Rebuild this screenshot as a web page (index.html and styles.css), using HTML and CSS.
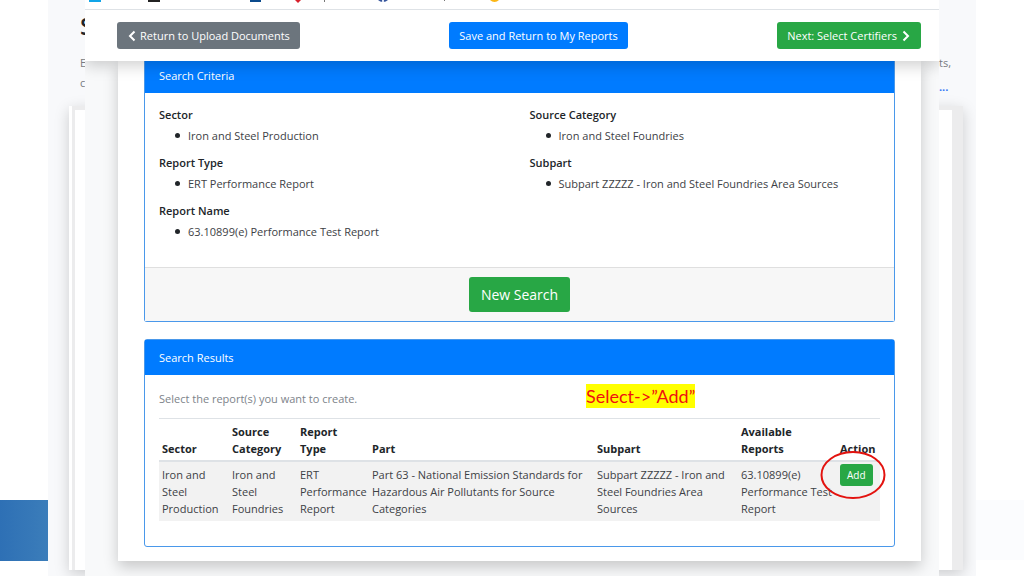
FILE: index.html
```html
<!DOCTYPE html>
<html lang="en">
<head>
<meta charset="utf-8">
<title>Search Results</title>
<link rel="stylesheet" href="styles.css">
</head>
<body>
<div class="slide">
  <div class="slide-band"></div>
  <div class="back-page">
    <div class="back-left">
      <div class="back-title">S</div>
      <div class="back-text">E<br>c</div>
    </div>
    <div class="back-right">
      <div class="back-text">ts,</div>
      <a class="back-link" href="#">...</a>
    </div>
    <div class="back-card"><div class="back-card-inner"></div></div>
  </div>

  <div class="front-page">
    <header class="topbar">
      <svg class="bookmarks" width="855" height="9" viewBox="0 0 855 9" aria-hidden="true">
        <rect x="4" y="0" width="12" height="2" fill="#12a5e8"/>
        <rect x="63" y="0" width="12" height="2" fill="#222"/>
        <rect x="165" y="0" width="11" height="2" fill="#0b4a8c"/>
        <path d="M210 0h6l-3 3z" fill="#d8202c"/>
        <path d="M239.500 0v2M359.500 0v1" stroke="#777"/>
        <path d="M293 0h10q-2 2-5 2t-5-2z" fill="#34539a"/>
        <path d="M297 0h2v2h-2z" fill="#dfe6f5"/>
        <path d="M405 0h9q-2 2-4.500 2T405 0z" fill="#fbb615"/>
      </svg>
      <nav class="toolbar">
        <button class="btn btn-gray" type="button">
          <svg width="9" height="12" viewBox="0 0 9 12" aria-hidden="true"><path d="M7.500 1.500L3 6l4.500 4.500" fill="none" stroke="#fff" stroke-width="2"/></svg>
          Return to Upload Documents
        </button>
        <button class="btn btn-blue" type="button">Save and Return to My Reports</button>
        <button class="btn btn-green" type="button">
          Next: Select Certifiers
          <svg width="10" height="12" viewBox="0 0 10 12" aria-hidden="true"><path d="M2.500 1.500L7 6l-4.500 4.500" fill="none" stroke="#fff" stroke-width="2"/></svg>
        </button>
      </nav>
    </header>

    <main class="sheet">
      <section class="card criteria">
        <h2 class="card-header">Search Criteria</h2>
        <div class="criteria-body">
          <dl class="terms">
            <dt>Sector</dt><dd>Iron and Steel Production</dd>
            <dt>Report Type</dt><dd>ERT Performance Report</dd>
            <dt>Report Name</dt><dd>63.10899(e) Performance Test Report</dd>
          </dl>
          <dl class="terms">
            <dt>Source Category</dt><dd>Iron and Steel Foundries</dd>
            <dt>Subpart</dt><dd>Subpart ZZZZZ - Iron and Steel Foundries Area Sources</dd>
          </dl>
        </div>
        <div class="card-footer"><button class="btn btn-green btn-large" type="button">New Search</button></div>
      </section>

      <section class="card results">
        <h2 class="card-header">Search Results</h2>
        <div class="results-body">
          <div class="intro">
            <p class="hint">Select the report(s) you want to create.</p>
            <mark class="callout">Select-&gt;”Add”</mark>
          </div>
          <table class="reports">
            <colgroup><col class="c-sector"><col class="c-source"><col class="c-type"><col class="c-part"><col class="c-subpart"><col class="c-reports"><col class="c-action"></colgroup>
            <thead>
              <tr><th>Sector</th><th>Source Category</th><th>Report Type</th><th>Part</th><th>Subpart</th><th>Available Reports</th><th>Action</th></tr>
            </thead>
            <tbody>
              <tr>
                <td>Iron and Steel Production</td>
                <td>Iron and Steel Foundries</td>
                <td>ERT Performance Report</td>
                <td>Part 63 - National Emission Standards for Hazardous Air Pollutants for Source Categories</td>
                <td>Subpart ZZZZZ - Iron and Steel Foundries Area Sources</td>
                <td>63.10899(e) Performance Test Report</td>
                <td><span class="action"><button class="btn btn-green btn-small" type="button">Add</button>
                  <svg class="ring" width="66" height="48" viewBox="0 0 66 48" aria-hidden="true"><ellipse cx="33" cy="24" rx="31.500" ry="23" fill="none" stroke="#e3130f" stroke-width="2"/></svg></span></td>
              </tr>
            </tbody>
          </table>
        </div>
      </section>
    </main>
  </div>
</div>
</body>
</html>
```

FILE: styles.css
```css
* { box-sizing: border-box; }

body {
  margin: 0;
  background: #fff;
  color: #212529;
  font-family: "Open Sans", "Noto Sans", sans-serif;
  font-size: 11px;
  line-height: 17px;
}

.slide {
  position: relative;
  height: 100vh;
  overflow: hidden;
  background: linear-gradient(#fff, #fff 500px, #fbfcfe 500px, #fbfcfe 560px, #fff 560px);
}

.slide-band {
  position: absolute;
  top: 500px;
  left: 0;
  width: 48px;
  height: 61px;
  background: linear-gradient(90deg, #2e70b5, #3b7dba);
}

/* Page shown behind the front window */
.back-page {
  position: absolute;
  inset: 0 48px 0 48px;
  overflow: hidden;
  background: #f8f9fb;
}

.back-left {
  position: absolute;
  top: 10px;
  left: 32px;
}

.back-title {
  font-size: 24px;
  font-weight: 600;
  line-height: 32px;
}

.back-text {
  color: #777b80;
  line-height: 20px;
}

.back-left .back-text { margin-top: 11px; }

.back-right {
  position: absolute;
  top: 53px;
  right: 25px;
}

.back-link {
  display: block;
  margin-top: 5px;
  color: #3478f6;
  font-weight: 700;
  text-decoration: none;
}

.back-card {
  position: absolute;
  inset: 106px 13px 6px 21px;
  padding: 4px 11px 0 3px;
  background: #ececed;
  border-left: 3px solid #fff;
  box-shadow: 0 4px 14px rgba(0, 0, 0, 0.18);
}

.back-card-inner {
  height: 100%;
  background: #fff;
}

/* Front window */
.front-page {
  position: absolute;
  inset: 0 85px 0 85px;
  overflow: hidden;
  background: #f8f9fa;
}

.topbar {
  position: relative;
  z-index: 1;
  background: #fff;
  box-shadow: 0 5px 14px rgba(0, 0, 0, 0.18);
}

.bookmarks { display: block; }

.toolbar {
  display: flex;
  justify-content: space-between;
  padding: 12px 18px 12px 32px;
  border-top: 1px solid #dee2e6;
}

.btn {
  display: flex;
  align-items: center;
  gap: 4px;
  height: 27px;
  padding: 0 10px;
  border: 0;
  border-radius: 3px;
  color: #fff;
  font: inherit;
  white-space: nowrap;
}

.btn-gray { background: #6c757d; }
.btn-blue { background: #007bff; }
.btn-green { background: #28a745; }

.btn-large {
  height: 35px;
  padding: 0 12px;
  font-size: 14px;
}

.btn-small {
  height: 22px;
  padding: 0 7px;
  font-size: 10px;
}

.sheet {
  margin: 0 18px 0 33px;
  padding: 0 26px 14px;
  background: #fff;
  box-shadow: 0 6px 14px rgba(0, 0, 0, 0.2);
}

.card {
  border: 1px solid #4a98ea;
  border-radius: 3px;
}

.criteria {
  border-top: 0;
  border-radius: 0 0 3px 3px;
}

.card-header {
  margin: 0;
  padding: 9px 14px;
  background: #007bff;
  color: #fff;
  font-size: 11px;
  font-weight: 400;
}

.criteria .card-header { padding: 6px 14px 9px; }

.criteria-body {
  display: grid;
  grid-template-columns: 1fr 1fr;
  gap: 20px;
  padding: 13px 14px 17px;
}

.terms { margin: 0; }

.terms dt { font-weight: 600; }

.terms dd {
  display: flex;
  align-items: center;
  gap: 8px;
  margin: 4px 0 10px 16px;
  color: #3d4145;
}

.terms dd::before {
  content: "";
  width: 5px;
  height: 5px;
  border-radius: 50%;
  background: #212529;
}

.card-footer {
  display: flex;
  justify-content: center;
  padding: 9px;
  background: #f7f7f7;
  border-top: 1px solid #dfdfdf;
}

.results { margin-top: 17px; }

.results-body { padding: 9px 14px 25px; }

.intro {
  display: grid;
  grid-template-columns: 427px 1fr;
  align-items: start;
  height: 34px;
}

.hint {
  margin: 6px 0 0;
  color: #7d838a;
}

.callout {
  justify-self: start;
  background: #ff0;
  color: #f01010;
  font-family: Lato, "Open Sans", sans-serif;
  font-size: 18px;
  line-height: 24px;
}

.reports {
  width: 100%;
  table-layout: fixed;
  border-collapse: collapse;
  border-top: 1px solid #dee2e6;
}

.c-sector { width: 70px; }
.c-source { width: 68px; }
.c-type { width: 72px; }
.c-part { width: 225px; }
.c-subpart { width: 144px; }
.c-reports { width: 99px; }

.reports th,
.reports td {
  padding: 4px 0 4px 3px;
  text-align: left;
}

.reports th {
  padding-bottom: 3px;
  vertical-align: bottom;
  font-weight: 700;
  border-bottom: 2px solid #dee2e6;
}

.reports th:nth-child(3) { padding-right: 8px; }

.reports td {
  vertical-align: top;
  background: #f2f2f2;
  color: #3d4145;
}

.reports td:last-child { padding-top: 2px; }

.action {
  position: relative;
  display: inline-block;
}

.ring {
  position: absolute;
  top: -13px;
  left: -20px;
}
```
